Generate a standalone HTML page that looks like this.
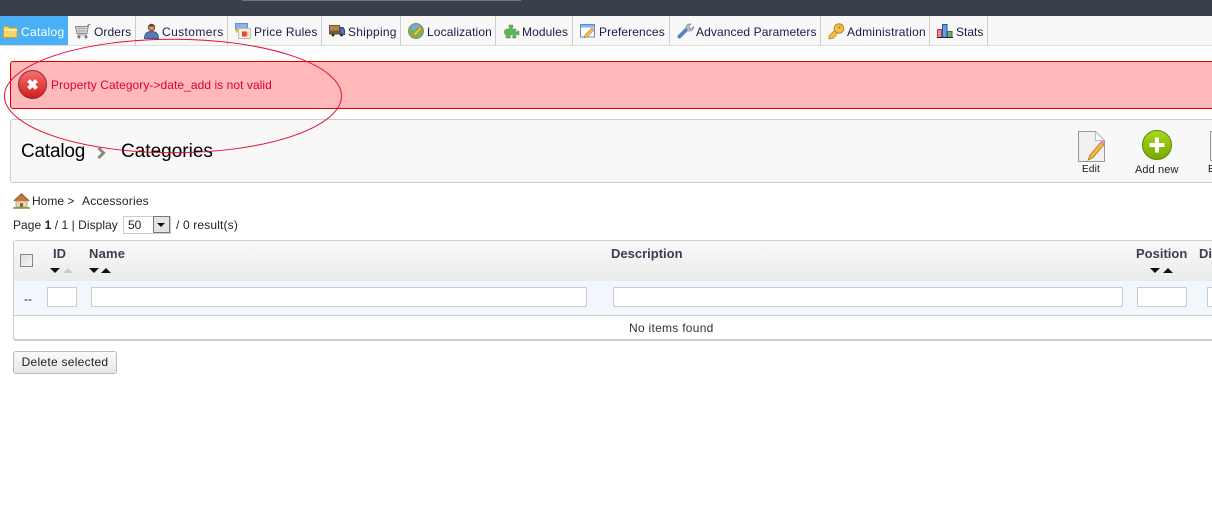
<!DOCTYPE html>
<html><head><meta charset="utf-8"><style>
html,body{margin:0;padding:0;background:#fff;width:1212px;height:511px;overflow:hidden}
body{position:relative;font-family:"Liberation Sans",Arial,sans-serif;font-size:12px;color:#333}
.a{position:absolute;white-space:nowrap}
.nav{color:#1a1a4a;top:25px;line-height:15px}
.div{position:absolute;top:16px;width:1px;height:29px;background:#ccc}
svg{position:absolute;overflow:visible}
.inp{position:absolute;top:287px;height:18px;background:#fff;border:1px solid #ccc;box-sizing:content-box}
.th{font-weight:bold;font-size:13px;line-height:15px;color:#3d3d55;top:246px}
</style></head><body>
<div class="a" style="left:0;top:0;width:1212px;height:16px;background:#3a4049"></div>
<div class="a" style="left:242px;top:0;width:279px;height:1px;background:#777"></div>
<div class="a" style="left:0;top:16px;width:1212px;height:29px;background:#f8f8f8"></div>
<div class="a" style="left:0;top:45px;width:1212px;height:1px;background:#ddd"></div>
<div class="a" style="left:0;top:16px;width:68px;height:29px;background:#49b0f8"></div>
<div class="div" style="left:135px"></div><div class="div" style="left:227px"></div><div class="div" style="left:321px"></div><div class="div" style="left:400px"></div><div class="div" style="left:495px"></div><div class="div" style="left:572px"></div><div class="div" style="left:669px"></div><div class="div" style="left:820px"></div><div class="div" style="left:929px"></div><div class="div" style="left:987px"></div>

<div class="a nav" style="left:21px;color:#fff;letter-spacing:.3px">Catalog</div>
<div class="a nav" style="left:94px;letter-spacing:.1px">Orders</div>
<div class="a nav" style="left:162px;letter-spacing:.4px">Customers</div>
<div class="a nav" style="left:254px;letter-spacing:.2px">Price Rules</div>
<div class="a nav" style="left:348px;letter-spacing:.25px">Shipping</div>
<div class="a nav" style="left:427px;letter-spacing:.13px">Localization</div>
<div class="a nav" style="left:522px;letter-spacing:.1px">Modules</div>
<div class="a nav" style="left:599px;letter-spacing:.1px">Preferences</div>
<div class="a nav" style="left:696px;letter-spacing:.1px">Advanced Parameters</div>
<div class="a nav" style="left:847px;letter-spacing:.2px">Administration</div>
<div class="a nav" style="left:956px">Stats</div>

<!-- nav icons -->
<svg style="left:3px;top:25px" width="15" height="13"><path d="M.5 1.500h5l1 1.500h7.500v9.500H.5z" fill="#f5d76e" stroke="#c9a030"/><path d="M1 5h13" stroke="#fff3b0" stroke-width="1.500"/></svg>
<svg style="left:75px;top:24px" width="16" height="15"><path d="M15.500.5h-2l-1.500 2H.5l1.500 7h10L13.500 1" fill="#e4e4e4" stroke="#8a8a8a"/><path d="M1 4.500h11.500M1.500 7h10.500M4 3v6M6.500 3v6M9 3v6" stroke="#a0a0a0" stroke-width=".7"/><path d="M2 11h10" stroke="#999"/><circle cx="4" cy="13" r="1.500" fill="#777"/><circle cx="11" cy="13" r="1.500" fill="#777"/></svg>
<svg style="left:144px;top:24px" width="15" height="15"><path d="M.5 14.500c0-5 2.500-7 7-7s7 2 7 7z" fill="#4a7fc0" stroke="#3a5a90"/><circle cx="7.500" cy="3.500" r="3.200" fill="#d09a70" stroke="#7a4a2a"/><path d="M4.500 2.500c1-2.500 5-2.500 6 0z" fill="#6a3a1a"/><path d="M6.500 7.500l1 4 1-4z" fill="#d44"/></svg>
<svg style="left:235px;top:23px" width="16" height="16"><rect x=".5" y=".5" width="12" height="6" fill="#8ab4e0" stroke="#6a90c0"/><rect x="3.500" y="5.500" width="12" height="10" fill="#f6ece0" stroke="#bbb"/><rect x="7" y="8.500" width="5" height="5" fill="#e84040"/><rect x="11.500" y="9" width="2" height="4" fill="#f0c040"/><rect x=".5" y="6.500" width="3" height="3" fill="#f0c040"/></svg>
<svg style="left:329px;top:25px" width="16" height="12"><rect x=".5" y=".5" width="10" height="8.500" fill="#b08848" stroke="#654"/><rect x="1" y="5.500" width="9.500" height="3" fill="#7a5a30"/><path d="M11 2.500h3l1.500 2.500v4.500H11z" fill="#4a78c0" stroke="#345"/><circle cx="4" cy="10" r="1.500" fill="#333"/><circle cx="12.500" cy="10" r="1.500" fill="#333"/></svg>
<svg style="left:408px;top:23px" width="16" height="16"><circle cx="8" cy="8" r="7.500" fill="#7ab060" stroke="#789868"/><path d="M3 4c3-3 7-3 10 0-2 2-3 0-5 2s-4 1-5-2z" fill="#6ab0e8"/><path d="M5 13l1-3 6-6 2 2-6 6z" fill="#f0c040" stroke="#b8842a" stroke-width=".6"/></svg>
<svg style="left:504px;top:25px" width="15" height="14"><path d="M5 0h4v2.500h-1V4h4v3h1.500V6H15v4h-1.500V9H12v4H8.500v-1.500H9.500V10h-4v1.500h1V13H2V9H.5V5H2V4h3.500V2.500H5z" fill="#5fb35f" stroke="#4a9a4a" stroke-width=".5"/></svg>
<svg style="left:580px;top:24px" width="16" height="15"><rect x=".5" y=".5" width="14" height="12.500" fill="#fff" stroke="#5a8ad0"/><rect x="1" y="1" width="13" height="2.500" fill="#8ab4e8"/><path d="M4 14l1-3 7-7 2 2-7 7z" fill="#f2c45a" stroke="#b88a30" stroke-width=".7"/></svg>
<svg style="left:677px;top:23px" width="17" height="17"><path d="M2.500 13.500L10 6" stroke="#5a82c8" stroke-width="4" stroke-linecap="round"/><path d="M9 5a4 4 0 0 1 5-4l-2 2 .5 2 2 .5 2-2a4 4 0 0 1-6 4z" fill="#b8bcc4" stroke="#808488" stroke-width=".6"/></svg>
<svg style="left:828px;top:23px" width="17" height="17"><path d="M1 16v-3l6-6 3 3-2 1v2h-2v2z" fill="#f0c040" stroke="#b8862a" stroke-width=".8"/><circle cx="11" cy="5.500" r="4.800" fill="#f0c040" stroke="#b8862a"/><circle cx="11.500" cy="4.500" r="1" fill="#a87820"/></svg>
<svg style="left:937px;top:24px" width="16" height="14"><rect x=".5" y="5.500" width="4" height="8" fill="#f08888" stroke="#a04060"/><rect x="5.500" y=".5" width="4.500" height="13" fill="#6a9ae8" stroke="#3050a0"/><rect x="10.500" y="7.500" width="4.500" height="6" fill="#70b070" stroke="#307040"/><path d="M0 13.500h16" stroke="#223"/></svg>

<!-- error -->
<div class="a" style="left:10px;top:61px;width:1210px;height:46px;background:#ffb9b9;border:1px solid #e00000;border-radius:3px"></div>
<svg style="left:18px;top:70px" width="29" height="29"><defs><linearGradient id="r" x1="0" y1="0" x2="0" y2="1"><stop offset="0" stop-color="#f87070"/><stop offset="1" stop-color="#d01c1c"/></linearGradient></defs><circle cx="14.500" cy="14.500" r="14" fill="url(#r)" stroke="#8a3030"/><path d="M10.500 10.500l8 8M18.500 10.500l-8 8" stroke="#fff" stroke-width="4"/></svg>
<div class="a" style="left:51px;top:78px;color:#dd0033;line-height:14px;letter-spacing:.06px">Property Category-&gt;date_add is not valid</div>

<!-- toolbar -->
<div class="a" style="left:10px;top:119px;width:1210px;height:62px;background:#f8f8f8;border:1px solid #ccc;border-radius:3px"></div>
<div class="a" style="left:21px;top:141px;font-size:19px;line-height:22px;color:#000;letter-spacing:-.2px">Catalog</div>
<svg style="left:97px;top:147px" width="10" height="12"><path d="M1.500 1l5 5-5 5" fill="none" stroke="#888" stroke-width="3"/></svg>
<div class="a" style="left:121px;top:141px;font-size:19px;line-height:22px;color:#000">Categories</div>
<svg style="left:1078px;top:131px" width="28" height="32"><path d="M.5.500h17l9 9v21H.5z" fill="#f0f0f0" stroke="#999"/><path d="M17.500.500v9h9z" fill="#fff" stroke="#bbb"/><path d="M10 29l2-5 11-13 3 2.500-11 13z" fill="#f0b840" stroke="#b07820" stroke-width=".8"/><rect x="23" y="9.500" width="3" height="3" fill="#e888d0"/></svg>
<div class="a" style="left:1082px;top:164px;font-size:10px;line-height:12px;color:#111;letter-spacing:.2px">Edit</div>
<svg style="left:1142px;top:130px" width="30" height="30"><defs><linearGradient id="g" x1="0" y1="0" x2="0" y2="1"><stop offset="0" stop-color="#a8d820"/><stop offset="1" stop-color="#78a800"/></linearGradient></defs><circle cx="15" cy="15" r="14.500" fill="url(#g)" stroke="#5e8a00"/><path d="M15 7.500v15M7.500 15h15" stroke="#fff" stroke-width="4"/></svg>
<div class="a" style="left:1135px;top:164px;font-size:11px;line-height:12px;color:#222;letter-spacing:.1px">Add new</div>
<div class="a" style="left:1210px;top:131px;width:10px;height:28px;background:#f2f2f2;border:1px solid #999"></div>
<div class="a" style="left:1208px;top:164px;font-size:10px;line-height:12px;color:#111">E</div>

<!-- breadcrumb -->
<svg style="left:13px;top:193px" width="17" height="16"><path d="M1 8l7.500-7 7.500 7" fill="#c87840" stroke="#a06030" stroke-width="1.500"/><rect x="3" y="8" width="11" height="6" fill="#eed8a8" stroke="#a89060" stroke-width=".7"/><rect x="7" y="10" width="3" height="4" fill="#865"/><path d="M0 15h17" stroke="#6a9a50" stroke-width="1.500"/></svg>
<div class="a" style="left:32px;top:194px;line-height:15px;color:#222">Home &gt;</div>
<div class="a" style="left:82px;top:194px;line-height:15px;color:#222;letter-spacing:.2px">Accessories</div>
<div class="a" style="left:13px;top:218px;line-height:15px;color:#222;letter-spacing:.05px">Page <b>1</b> / 1 | Display</div>
<div class="a" style="left:123px;top:216px;width:46px;height:16px;background:#fff;border:1px solid #ccc"></div>
<div class="a" style="left:128px;top:218px;line-height:15px;color:#222">50</div>
<div class="a" style="left:153px;top:216px;width:15px;height:15px;background:#e4e4e4;border:1px solid #777;box-sizing:content-box"></div>
<svg style="left:157px;top:223px" width="9" height="5"><path d="M0 0h8l-4 4z" fill="#111"/></svg>
<div class="a" style="left:176px;top:218px;line-height:15px;color:#222;letter-spacing:.15px">/ 0 result(s)</div>

<!-- table -->
<div class="a" style="left:13px;top:240px;width:1210px;height:98px;border:1px solid #ccc;border-bottom:2px solid #ccc;border-radius:3px;box-sizing:content-box;background:#fff"></div>
<div class="a" style="left:14px;top:241px;width:1198px;height:40px;background:linear-gradient(#f9f9f9,#ebebeb)"></div>
<div class="a" style="left:14px;top:281px;width:1198px;height:34px;background:#f1f7fd"></div>
<div class="a" style="left:14px;top:315px;width:1198px;height:1px;background:#ccc"></div>
<div class="a" style="left:20px;top:254px;width:11px;height:11px;background:linear-gradient(135deg,#ddd,#f4f4f4);border:1px solid #888"></div>
<div class="a th" style="left:53px">ID</div>
<div class="a th" style="left:89px;letter-spacing:.2px">Name</div>
<div class="a th" style="left:611px">Description</div>
<div class="a th" style="left:1136px">Position</div>
<div class="a th" style="left:1199px">Display</div>
<svg style="left:0;top:0" width="1212" height="511">
<path d="M50 268h10l-5 5z M89 268h10l-5 5z M1150 268h10l-5 5z" fill="#111"/>
<path d="M63 273h10l-5-5z" fill="#ccc"/>
<path d="M101 273h10l-5-5z M1163 273h10l-5-5z" fill="#111"/>
</svg>
<div class="a" style="left:24px;top:292px;line-height:15px;color:#222">--</div>
<div class="inp" style="left:47px;width:28px"></div>
<div class="inp" style="left:91px;width:494px"></div>
<div class="inp" style="left:613px;width:508px"></div>
<div class="inp" style="left:1137px;width:48px"></div>
<div class="inp" style="left:1207px;width:30px"></div>
<div class="a" style="left:629px;top:321px;line-height:15px;color:#333;letter-spacing:.28px">No items found</div>

<div class="a" style="left:13px;top:351px;width:102px;height:21px;background:linear-gradient(#fafafa,#e6e6e6);border:1px solid #bbb;border-radius:3px;text-align:center;line-height:21px;color:#222;letter-spacing:.27px">Delete selected</div>

<svg style="left:0;top:0" width="1212" height="511"><ellipse cx="173" cy="96" rx="168.500" ry="56.800" fill="none" stroke="#e01030" stroke-width="1"/></svg>
</body></html>
